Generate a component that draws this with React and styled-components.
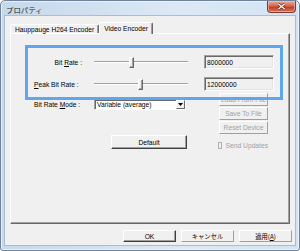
import React from 'react';
import styled, { createGlobalStyle } from 'styled-components';

const GlobalStyle = createGlobalStyle`
  html, body {
    margin: 0;
    padding: 0;
    background: #ffffff;
  }
  body {
    font-family: "Liberation Sans", "Noto Sans CJK JP", sans-serif;
    font-size: 6.7px;
    color: #000;
  }
  * { box-sizing: border-box; }
`;

const Window = styled.div`
  width: 300px;
  height: 251px;
  display: flex;
  flex-direction: column;
  border: 1px solid #6f829b;
  border-radius: 5px 5px 3px 3px;
  padding: 0 3px 4px 3px;
  background: linear-gradient(to right, #c6d8ec, #dce8f5 60%, #d3e3f3);
  box-shadow: inset 0 0 0 1px #e8f0fa;
`;

const TitleBar = styled.div`
  height: 14px;
  display: flex;
  align-items: center;
  justify-content: space-between;
  padding-left: 2px;
`;

const Title = styled.span`
  font-family: "Noto Sans CJK JP", sans-serif;
  font-size: 7.4px;
  color: #1a1a1a;
  margin-top: 2px;
`;

const CloseButton = styled.div`
  width: 29px;
  height: 12px;
  margin-top: -3px;
  display: flex;
  align-items: center;
  justify-content: center;
  border: 1px solid #7e3b2e;
  border-top: none;
  border-radius: 0 0 4px 4px;
  background: linear-gradient(#e7a897, #d46a52 45%, #c23f25 55%, #d8735a);
  box-shadow: inset 0 0 0 1px rgba(255, 210, 200, 0.5);
`;

const Client = styled.div`
  flex: 1;
  display: flex;
  flex-direction: column;
  background: #f0f0f0;
  border: 1px solid #a9bed6;
  padding: 6px 3px 3px 5px;
`;

const TabStrip = styled.div`
  height: 11px;
  display: flex;
  align-items: flex-end;
  position: relative;
  z-index: 1;
`;

const Tab = styled.div`
  height: ${(p) => (p.$active ? '12px' : '9px')};
  margin-bottom: ${(p) => (p.$active ? '-1px' : '0')};
  padding: 0 4px;
  display: flex;
  align-items: center;
  white-space: nowrap;
  background: #f0f0f0;
  border-top: 1px solid #ffffff;
  border-left: 1px solid #ffffff;
  border-right: 1px solid #696969;
  box-shadow: inset -1px 0 #a0a0a0;
  border-radius: 2px 2px 0 0;
`;

const Panel = styled.div`
  position: relative;
  height: 191px;
  margin-right: 2px;
  padding: 21px 0 0 23px;
  background: #f0f0f0;
  border-top: 1px solid #ffffff;
  border-left: 1px solid #ffffff;
  border-right: 1px solid #696969;
  border-bottom: 1px solid #696969;
  box-shadow: inset -1px -1px #a0a0a0;
`;

const Highlight = styled.div`
  position: absolute;
  left: 14px;
  top: 11px;
  width: 258px;
  height: 55px;
  border: 3px solid #5ea7ee;
  z-index: 2;
  pointer-events: none;
`;

const Row = styled.div`
  display: flex;
  align-items: center;
  height: ${(p) => p.$h || 14}px;
  margin-top: ${(p) => p.$mt || 0}px;
`;

const Label = styled.div`
  width: 48px;
  white-space: nowrap;
  text-align: ${(p) => p.$align || 'left'};
`;

const SliderBox = styled.div`
  position: relative;
  width: 94px;
  height: 14px;
  margin-left: 12px;
  display: flex;
  align-items: center;
`;

const Track = styled.div`
  width: 100%;
  height: 2px;
  border-top: 1px solid #a0a0a0;
  border-bottom: 1px solid #ffffff;
`;

const Thumb = styled.div`
  position: absolute;
  top: 2px;
  width: 5px;
  height: 11px;
  margin-left: -2px;
  background: #f0f0f0;
  border-top: 1px solid #ffffff;
  border-left: 1px solid #ffffff;
  border-right: 1px solid #696969;
  border-bottom: 1px solid #696969;
  box-shadow: inset -1px -1px #a0a0a0;
`;

const Edit = styled.div`
  width: 70px;
  height: 14px;
  margin-left: 16px;
  padding: 0 2px;
  display: flex;
  align-items: center;
  background: #f0f0f0;
  border-top: 1px solid #a0a0a0;
  border-left: 1px solid #a0a0a0;
  border-right: 1px solid #ffffff;
  border-bottom: 1px solid #ffffff;
  box-shadow: inset 1px 1px #696969, inset -1px -1px #e3e3e3;
`;

const Lower = styled.div`
  display: flex;
  margin-top: 2px;
`;

const LeftCol = styled.div`
  width: 153px;
  display: flex;
  flex-direction: column;
`;

const Combo = styled.div`
  width: 92px;
  height: 11px;
  margin-left: 12px;
  display: flex;
  align-items: center;
  justify-content: space-between;
  background: #ffffff;
  border-top: 1px solid #a0a0a0;
  border-left: 1px solid #a0a0a0;
  border-right: 1px solid #ffffff;
  border-bottom: 1px solid #ffffff;
  box-shadow: inset 1px 1px #696969;
  padding-left: 2px;
  white-space: nowrap;
  overflow: hidden;
`;

const ComboArrow = styled.div`
  width: 9px;
  height: 9px;
  display: flex;
  align-items: center;
  justify-content: center;
  background: #f0f0f0;
  border-top: 1px solid #ffffff;
  border-left: 1px solid #ffffff;
  border-right: 1px solid #696969;
  border-bottom: 1px solid #696969;
`;

const Button = styled.div`
  width: ${(p) => p.$w}px;
  height: ${(p) => p.$h || 13}px;
  display: flex;
  align-items: center;
  justify-content: center;
  white-space: nowrap;
  background: #f0f0f0;
  color: ${(p) => (p.$disabled ? '#a0a0a0' : '#000')};
  border-top: 1px solid #ffffff;
  border-left: 1px solid #ffffff;
  border-right: 1px solid ${(p) => (p.$strong ? '#404040' : '#a0a0a0')};
  border-bottom: 1px solid ${(p) => (p.$strong ? '#404040' : '#a0a0a0')};
  box-shadow: ${(p) => (p.$strong ? 'inset -1px -1px #a0a0a0' : 'none')};
`;

const DefaultWrap = styled.div`
  display: flex;
  justify-content: flex-end;
  margin-top: 25px;
`;

const RightCol = styled.div`
  width: 49px;
  margin-left: 32px;
  display: flex;
  flex-direction: column;
  gap: 1px;
`;

const CheckRow = styled.div`
  display: flex;
  align-items: center;
  gap: 4px;
  margin-top: 7px;
  margin-left: -1px;
  color: #a0a0a0;
  white-space: nowrap;
`;

const CheckBox = styled.div`
  width: 7px;
  height: 7px;
  background: #f0f0f0;
  border: 1px solid #b0b0b0;
`;

const ButtonBar = styled.div`
  display: flex;
  justify-content: flex-end;
  gap: 5px;
  margin-top: 6px;
`;

const JP = styled.span`
  font-family: "Noto Sans CJK JP", sans-serif;
  font-size: 6.3px;
`;

const Slider = ({ value }) => (
  <SliderBox>
    <Track />
    <Thumb style={{ left: `${value * 100}%` }} />
  </SliderBox>
);

const App = () => {
  return (
    <>
      <GlobalStyle />
      <Window>
        <TitleBar>
          <Title>プロパティ</Title>
          <CloseButton>
            <svg width="9" height="7" viewBox="0 0 9 7">
              <path d="M1.5 1 L7.5 6 M7.5 1 L1.5 6" stroke="#5a1e12" strokeWidth="2.6" />
              <path d="M1.5 1 L7.5 6 M7.5 1 L1.5 6" stroke="#ffffff" strokeWidth="1.4" />
            </svg>
          </CloseButton>
        </TitleBar>
        <Client>
          <TabStrip>
            <Tab>Hauppauge H264 Encoder</Tab>
            <Tab $active>Video Encoder</Tab>
          </TabStrip>
          <Panel>
            <Highlight />
            <Row>
              <Label $align="right">Bit <u>R</u>ate :</Label>
              <Slider value={0.39} />
              <Edit>8000000</Edit>
            </Row>
            <Row $mt={8}>
              <Label><u>P</u>eak Bit Rate :</Label>
              <Slider value={0.49} />
              <Edit>12000000</Edit>
            </Row>
            <Lower>
              <LeftCol>
                <Row $h={11} $mt={6}>
                  <Label>Bit Rate <u>M</u>ode :</Label>
                  <Combo>
                    Variable (average)
                    <ComboArrow>
                      <svg width="5" height="3" viewBox="0 0 5 3">
                        <path d="M0 0 L5 0 L2.5 3 Z" fill="#000" />
                      </svg>
                    </ComboArrow>
                  </Combo>
                </Row>
                <DefaultWrap>
                  <Button $w={76} $h={14} $strong>Default</Button>
                </DefaultWrap>
              </LeftCol>
              <RightCol>
                <Button $w={49} $disabled>Load From File</Button>
                <Button $w={49} $disabled>Save To File</Button>
                <Button $w={49} $disabled>Reset Device</Button>
                <CheckRow>
                  <CheckBox />
                  Send Updates
                </CheckRow>
              </RightCol>
            </Lower>
          </Panel>
          <ButtonBar>
            <Button $w={53} $h={12} $strong>OK</Button>
            <Button $w={53} $h={12}><JP>キャンセル</JP></Button>
            <Button $w={53} $h={12}><JP>適用(<u>A</u>)</JP></Button>
          </ButtonBar>
        </Client>
      </Window>
    </>
  );
};

export default App;
